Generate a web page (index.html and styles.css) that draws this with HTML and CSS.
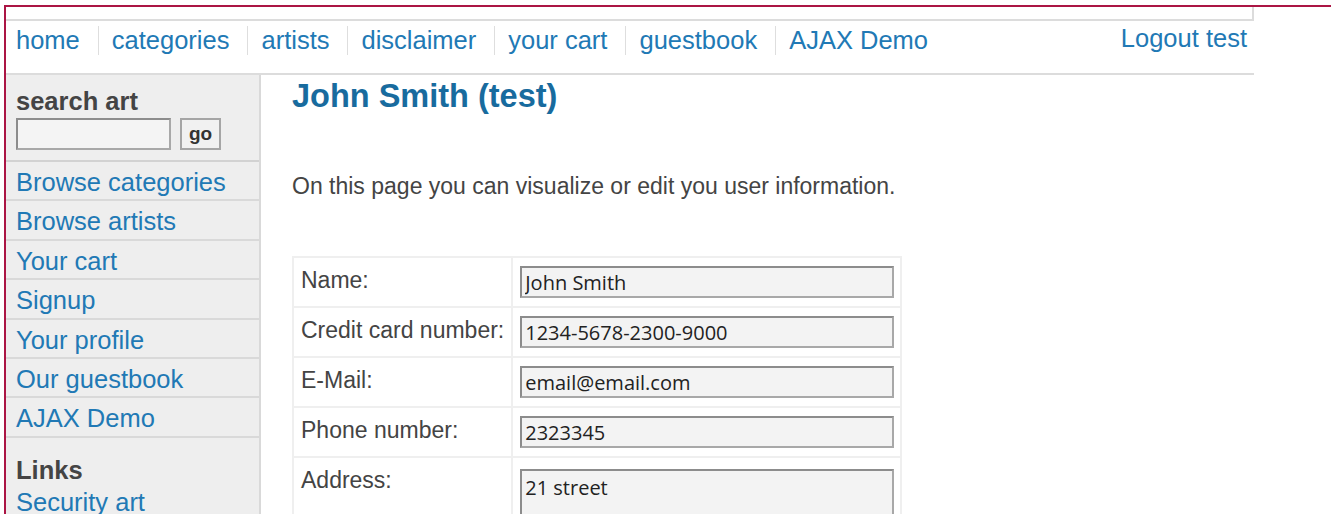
FILE: index.html
```html
<!DOCTYPE html>
<html lang="en">
<head>
<meta charset="utf-8">
<title>user info</title>
<link rel="stylesheet" href="styles.css">
</head>
<body>
<div class="frame">
  <div class="masthead"></div>
  <div class="topnav">
    <nav class="global-nav">
      <a href="#">home</a>
      <a href="#">categories</a>
      <a href="#">artists</a>
      <a href="#">disclaimer</a>
      <a href="#">your cart</a>
      <a href="#">guestbook</a>
      <a href="#">AJAX Demo</a>
    </nav>
    <a class="logout" href="#">Logout test</a>
  </div>
  <div class="layout">
    <aside class="sidebar">
      <div class="search">
        <div class="side-title">search art</div>
        <form class="search-form">
          <input class="search-input" type="text">
          <button class="search-btn" type="button">go</button>
        </form>
      </div>
      <ul class="side-links">
        <li><a href="#">Browse categories</a></li>
        <li><a href="#">Browse artists</a></li>
        <li><a href="#">Your cart</a></li>
        <li><a href="#">Signup</a></li>
        <li><a href="#">Your profile</a></li>
        <li><a href="#">Our guestbook</a></li>
        <li><a href="#">AJAX Demo</a></li>
      </ul>
      <div class="links-block">
        <div class="side-title links-title">Links</div>
        <a href="#">Security art</a>
      </div>
    </aside>
    <main class="content">
      <h2 class="page-title">John Smith (test)</h2>
      <p class="intro">On this page you can visualize or edit you user information.</p>
      <table class="user-table">
        <tr>
          <td class="label">Name:</td>
          <td class="field"><input class="field-input" type="text" value="John Smith"></td>
        </tr>
        <tr>
          <td class="label">Credit card number:</td>
          <td class="field"><input class="field-input" type="text" value="1234-5678-2300-9000"></td>
        </tr>
        <tr>
          <td class="label">E-Mail:</td>
          <td class="field"><input class="field-input" type="text" value="email@email.com"></td>
        </tr>
        <tr>
          <td class="label">Phone number:</td>
          <td class="field"><input class="field-input" type="text" value="2323345"></td>
        </tr>
        <tr>
          <td class="label">Address:</td>
          <td class="field"><textarea class="field-area">21 street</textarea></td>
        </tr>
      </table>
    </main>
  </div>
</div>
</body>
</html>
```

FILE: styles.css
```css
html, body {
  margin: 0;
  padding: 0;
  background: #fff;
  overflow: hidden;
}

body {
  font-family: "Liberation Sans", Arial, sans-serif;
  font-size: 25.5px;
  color: #444;
  padding: 5px 0 0 4px;
}

a {
  color: #2179b5;
  text-decoration: none;
}

.frame {
  border-top: 2px solid #ab1544;
  border-left: 2px solid #ab1544;
  height: 600px;
}

/* top strip */
.masthead {
  width: 1248px;
  height: 14px;
  box-sizing: border-box;
  border-right: 2px solid #dcdcdc;
  border-bottom: 2px solid #dcdcdc;
}

.topnav {
  width: 1248px;
  height: 54px;
  box-sizing: border-box;
  padding: 5px 7px 0 10px;
  border-bottom: 2px solid #dcdcdc;
  display: flex;
  justify-content: space-between;
  align-items: flex-start;
}

.global-nav {
  display: flex;
}

.global-nav a {
  padding: 0 18px 0 13px;
  border-left: 1px solid #dedede;
}

.global-nav a:first-child {
  padding-left: 0;
  border-left: none;
}

.logout {
  margin-top: -2px;
}

/* body area */
.layout {
  display: flex;
  align-items: stretch;
}

.sidebar {
  width: 253px;
  flex: none;
  background: #eeeeee;
  border-right: 2px solid #d9d9d9;
  min-height: 520px;
}

.search {
  padding: 12px 10px 10px;
  border-bottom: 2px solid #d2d2d2;
}

.side-title {
  font-weight: bold;
  color: #444;
}

.search-form {
  display: flex;
  gap: 9px;
  margin: 2px 0 0;
}

.search-input {
  width: 155px;
  height: 32px;
  box-sizing: border-box;
  margin: 0;
  border: 2px solid #9c9c9c;
  border-color: #8c8c8c #a8a8a8 #a8a8a8 #8c8c8c;
  background: #f4f4f4;
}

.search-btn {
  width: 41px;
  height: 32px;
  box-sizing: border-box;
  margin: 0;
  padding: 0;
  border: 2px solid #a5a5a5;
  background: #f1f1f1;
  font-family: "Liberation Sans", Arial, sans-serif;
  font-weight: bold;
  font-size: 19px;
  color: #333;
}

.side-links {
  list-style: none;
  margin: 0;
  padding: 0;
}

.side-links li {
  padding: 6px 10px 2px;
  line-height: 29.4px;
  border-bottom: 2px solid #d9d9d9;
}

.side-links a {
  display: block;
}

.links-block {
  padding: 18px 10px 0;
}

.links-title {
  margin-bottom: 3px;
}

/* main column */
.content {
  flex: 1;
  padding: 3px 0 0 31px;
}

.page-title {
  margin: 0;
  font-size: 32.5px;
  font-weight: bold;
  color: #186b9e;
}

.intro {
  margin: 58px 0 0;
  font-size: 23px;
}

.user-table {
  margin-top: 56px;
  border-spacing: 0;
  border-top: 2px solid #efefef;
  border-left: 2px solid #efefef;
  font-size: 23px;
  color: #444;
}

.user-table td {
  border-right: 2px solid #efefef;
  border-bottom: 2px solid #efefef;
  vertical-align: top;
}

.label {
  padding: 9px 7px 7px;
  white-space: nowrap;
}

.field {
  padding: 8px 6px 8px 7px;
}

.field-input,
.field-area {
  display: block;
  width: 374px;
  box-sizing: border-box;
  margin: 0;
  border: 2px solid #9c9c9c;
  border-color: #8c8c8c #a8a8a8 #a8a8a8 #8c8c8c;
  background: #f3f3f3;
  font-family: "Open Sans", "Noto Sans", sans-serif;
  font-size: 20px;
  color: #222;
}

.field-input {
  height: 32px;
  padding: 0 3px;
}

.field-area {
  height: 90px;
  margin-top: 3px;
  padding: 3px 3px;
  resize: none;
}
```
